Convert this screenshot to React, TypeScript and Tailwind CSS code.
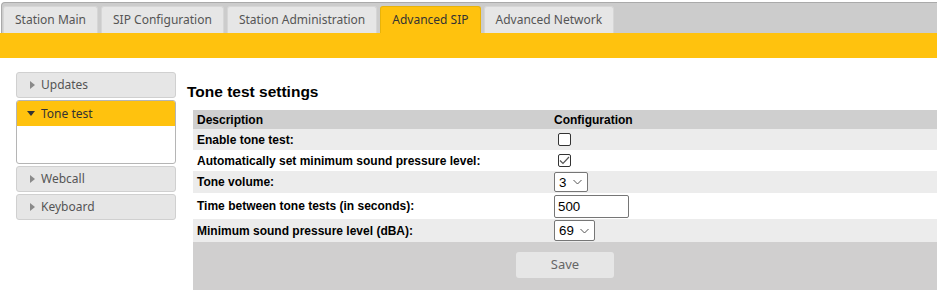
import { useState } from 'react';

const tabs = [
  'Station Main',
  'SIP Configuration',
  'Station Administration',
  'Advanced SIP',
  'Advanced Network',
];

const sideItems = ['Updates', 'Tone test', 'Webcall', 'Keyboard'];

const uiFont = { fontFamily: '"Noto Sans", "Open Sans", sans-serif' };
const tableFont = { fontFamily: '"Liberation Sans", Arial, sans-serif' };

const RightCaret = () => (
  <svg width="5" height="8" viewBox="0 0 5 8" className="shrink-0">
    <path d="M0 0 L5 4 L0 8 Z" fill="#8a8a8a" />
  </svg>
);

const DownCaret = () => (
  <svg width="8" height="5" viewBox="0 0 8 5" className="shrink-0">
    <path d="M0 0 L8 0 L4 5 Z" fill="#333" />
  </svg>
);

const Chevron = () => (
  <svg width="9" height="5" viewBox="0 0 9 5" fill="none">
    <path d="M0.5 0.5 L4.5 4.5 L8.5 0.5" stroke="#555" strokeWidth="1" />
  </svg>
);

const Checkbox = ({ checked, onChange }: { checked: boolean; onChange: () => void }) => (
  <button
    onClick={onChange}
    className="flex h-[13px] w-[13px] items-center justify-center rounded-[2px] border border-[#333] bg-white"
  >
    {checked && (
      <svg width="11" height="9" viewBox="0 0 11 9" fill="none">
        <path d="M1 4.5 L4 7.5 L10 1" stroke="#555" strokeWidth="1.2" />
      </svg>
    )}
  </button>
);

const Select = ({ value, options, width }: { value: string; options: string[]; width: string }) => (
  <div className={`relative ${width}`}>
    <select
      defaultValue={value}
      className="h-full w-full appearance-none rounded-[2px] border border-[#767676] bg-white pl-[4px] text-[13.3px] font-normal text-black outline-none"
      style={tableFont}
    >
      {options.map((o) => (
        <option key={o}>{o}</option>
      ))}
    </select>
    <span className="pointer-events-none absolute right-[6px] top-1/2 -translate-y-1/2">
      <Chevron />
    </span>
  </div>
);

const App = () => {
  const [enable, setEnable] = useState(false);
  const [auto, setAuto] = useState(true);

  const rows = [
    {
      label: 'Enable tone test:',
      h: 'h-[21px]',
      bg: 'bg-[#ececec]',
      field: (
        <div className="pl-[4px]">
          <Checkbox checked={enable} onChange={() => setEnable(!enable)} />
        </div>
      ),
    },
    {
      label: 'Automatically set minimum sound pressure level:',
      h: 'h-[21px]',
      bg: 'bg-white',
      field: (
        <div className="pl-[4px]">
          <Checkbox checked={auto} onChange={() => setAuto(!auto)} />
        </div>
      ),
    },
    {
      label: 'Tone volume:',
      h: 'h-[22px]',
      bg: 'bg-[#ececec]',
      field: (
        <Select value="3" options={['1', '2', '3', '4', '5']} width="h-[20px] w-[34px]" />
      ),
    },
    {
      label: 'Time between tone tests (in seconds):',
      h: 'h-[26px]',
      bg: 'bg-white',
      field: (
        <input
          defaultValue="500"
          className="h-[23px] w-[75px] rounded-[2px] border border-[#767676] bg-white px-[3px] text-[13.3px] font-normal text-black outline-none"
          style={tableFont}
        />
      ),
    },
    {
      label: 'Minimum sound pressure level (dBA):',
      h: 'h-[23px]',
      bg: 'bg-[#ececec]',
      field: (
        <Select value="69" options={['60', '65', '69', '75']} width="h-[21px] w-[41px]" />
      ),
    },
  ];

  return (
    <div className="h-[290px] w-[937px] overflow-hidden bg-white">
      <nav className="ml-[1px] mt-[2px] flex h-[31px] items-end gap-[3px] rounded-tl-[4px] border-l border-t border-[#aaa] bg-[#cccccc] pl-[1px]" style={uiFont}>
        {tabs.map((t) => (
          <div
            key={t}
            className={`flex h-[27px] items-center rounded-t-[3px] border border-b-0 px-[11px] text-[12px] ${
              t === 'Advanced SIP'
                ? 'border-[#e8b30a] bg-[#ffc20e] text-[#333]'
                : 'border-[#d6d6d6] bg-[#e6e6e6] text-[#555]'
            }`}
          >
            {t}
          </div>
        ))}
      </nav>
      <div className="h-[25px] bg-[#ffc20e]" />

      <div className="flex px-4">
        <aside className="mt-[14px] flex w-[160px] shrink-0 flex-col gap-[2px]" style={uiFont}>
          {sideItems.map((s) =>
            s === 'Tone test' ? (
              <div key={s} className="overflow-hidden rounded-[3px] border border-[#b5b5b5] bg-white">
                <div className="flex h-[25px] items-center gap-[6px] bg-[#ffc20e] pl-[10px] text-[12px] text-[#333]">
                  <DownCaret />
                  <span>{s}</span>
                </div>
                <div className="h-[37px]" />
              </div>
            ) : (
              <div
                key={s}
                className="flex h-[26px] items-center gap-[6px] rounded-[3px] border border-[#d0d0d0] bg-[#e6e6e6] pl-[13px] text-[12px] text-[#555]"
              >
                <RightCaret />
                <span>{s}</span>
              </div>
            )
          )}
        </aside>

        <main className="ml-[11px] flex-1" style={tableFont}>
          <h1 className="mt-[25px] text-[15.5px] font-bold leading-[18px] text-black">
            Tone test settings
          </h1>
          <div className="-mr-4 ml-[6px] mt-[9px]">
            <div className="grid h-[19px] grid-cols-[361px_1fr] items-center bg-[#cfcfcf] text-[12px] font-bold text-black">
              <span className="pl-[4px]">Description</span>
              <span>Configuration</span>
            </div>
            {rows.map((r) => (
              <div
                key={r.label}
                className={`grid grid-cols-[361px_1fr] items-center ${r.h} ${r.bg} text-[12px] font-bold text-black`}
              >
                <span className="pl-[4px]">{r.label}</span>
                {r.field}
              </div>
            ))}
            <div className="flex h-[60px] justify-center bg-[#d0cfcf] pt-[10px]">
              <button
                className="h-[26px] w-[98px] rounded-[3px] bg-[#e6e6e6] text-[13px] text-[#666]"
                style={uiFont}
              >
                Save
              </button>
            </div>
          </div>
        </main>
      </div>
    </div>
  );
};

export default App;
